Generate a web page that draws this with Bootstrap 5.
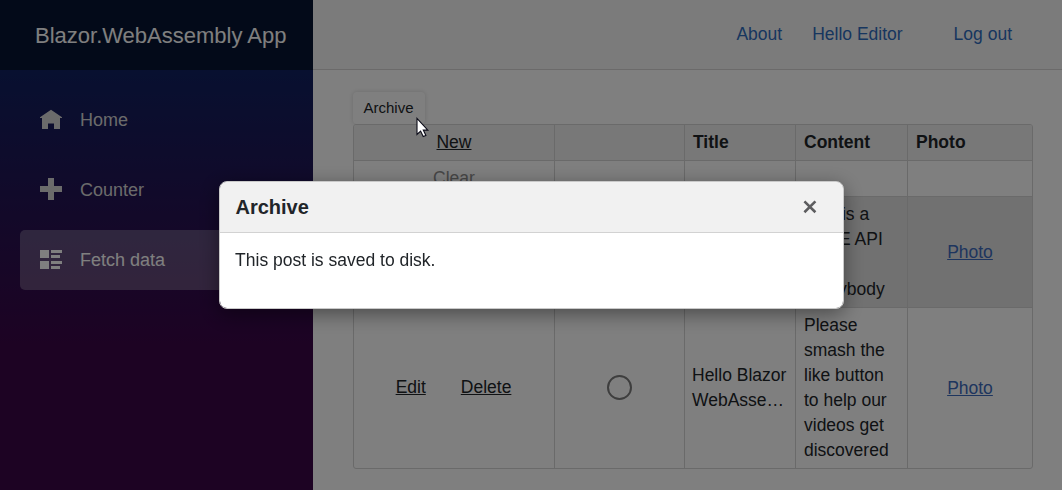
<!DOCTYPE html>
<html lang="en">
<head>
<meta charset="utf-8">
<meta name="viewport" content="width=device-width, initial-scale=1">
<title>Blazor.WebAssembly App</title>
<link href="https://cdn.jsdelivr.net/npm/bootstrap@5.3.0/dist/css/bootstrap.min.css" rel="stylesheet">
<style>
body { font-family: "Liberation Sans", Arial, sans-serif; font-size: 17.5px; line-height: 25px; color: #212529; height: 100vh; overflow: hidden; }
.side { width: 313px; background: linear-gradient(180deg, #052767 0%, #3a0647 70%); }
.brand-bar { height: 70px; background: #061532; color: #fff; font-size: 22px; padding-left: 35px; }
.side .nav { padding: 20px 20px 0; gap: 10px; }
.side .nav-link { height: 60px; padding: 0 0 0 19px; font-size: 18px; color: #d7d7d7; gap: 17px; border-radius: 5px; }
.side .nav-link.active { background: rgba(255,255,255,.25); color: #fff; }
.top-bar { height: 70px; background: #f7f7f7; border-bottom: 1px solid #d6d5d5; padding: 0 50px 1px 0; }
.top-bar a { color: #2f6cbe; text-decoration: none; }
.top-bar .about-link { margin-right: 30px; }
.top-bar .user-link { margin-right: 51px; }
.page-body { padding: 22px 29px 0 40px; }
.tool-btn { width: 72px; height: 32px; padding: 0 1px 0 0; font-size: 15px; line-height: 30px; background: #fff; border-radius: 4px; box-shadow: 0 0 5px rgba(0,0,0,.16); border: 0; color: #212529; }
.data-grid { width: 680px; border: 1px solid #d4d4d4; border-radius: 3px; overflow: hidden; }
.data-grid table { table-layout: fixed; width: 678px; margin: 0; color: #212529; border-collapse: separate; border-spacing: 0; }
.data-grid th, .data-grid td { padding: 5px 8px; border-right: 1px solid #d4d4d4; border-bottom: 1px solid #d4d4d4; vertical-align: middle; overflow-wrap: break-word; }
.data-grid tr > :last-child { border-right: 0; }
.data-grid tbody tr:last-child td { border-bottom: 0; }
.data-grid thead th { background: #f0f0f0; height: 36px; line-height: 25px; }
.data-grid .filter-row td { height: 36px; }
.data-grid .filter-hint { color: #8e8e8e; }
.data-grid .selected td { background: #e2e2e2; }
.data-grid a { color: #212529; }
.data-grid a.photo-link { color: #3d6bbd; }
.data-grid .commands { padding: 4px 9px 6px 8px; }
.data-grid .edit-link { margin-right: 35px; }
.data-grid .title-cell { padding-left: 7px; }
.pick { display: block; width: 25px; height: 25px; margin: -1px auto 0; border: 2px solid #7c7c7c; border-radius: 50%; }
.shade { background: rgba(0,0,0,.5); z-index: 1040; }
.modal-dialog { max-width: 625px; }
.modal-content { height: 128px; border: 1px solid #c9c9c9; border-radius: 8px; box-shadow: 0 5px 20px rgba(0,0,0,.42); overflow: hidden; }
.modal-header { height: 51px; padding: 0 25px 0 16px; background: #f1f1f1; border-bottom: 1px solid #d2d2d2; border-radius: 0; }
.modal-title { font-size: 20px; line-height: 25px; font-weight: 700; }
.modal-body { padding: 15px 15px 0 15.6px; }
.pointer { left: 416px; top: 117px; z-index: 1060; }
</style>
</head>
<body class="d-flex">
<aside class="side flex-shrink-0">
  <div class="brand-bar d-flex align-items-center">Blazor.WebAssembly App</div>
  <nav class="nav flex-column">
    <a class="nav-link d-flex align-items-center" href="#">
      <svg width="24" height="24" viewBox="0 0 24 24" fill="currentColor"><path d="M12 1.7 1 9.2v.8h2v11h6v-5.5h6V21h6V10h2v-.8z"/></svg>Home</a>
    <a class="nav-link d-flex align-items-center" href="#">
      <svg width="24" height="24" viewBox="0 0 24 24" fill="currentColor"><path d="M9 0h6v8h8v6h-8v8H9v-8H1V8h8z"/></svg>Counter</a>
    <a class="nav-link active d-flex align-items-center" href="#">
      <svg width="24" height="24" viewBox="0 0 24 24" fill="currentColor"><path d="M1 2h9v8H1zM12 2h11v3H12zM12 7h9v3h-9zM1 13h9v8H1zM12 13h11v3H12zM12 18h9v3h-9z"/></svg>Fetch data</a>
  </nav>
</aside>
<main class="flex-grow-1">
  <header class="top-bar d-flex align-items-center justify-content-end">
    <a href="#" class="about-link">About</a><a href="#" class="user-link">Hello Editor</a><a href="#">Log out</a>
  </header>
  <div class="page-body">
    <button class="tool-btn d-block" type="button">Archive</button>
    <div class="data-grid">
      <table>
        <colgroup><col style="width:201px"><col style="width:130px"><col style="width:111px"><col style="width:112px"><col style="width:124px"></colgroup>
        <thead><tr><th class="text-center fw-normal"><a href="#">New</a></th><th></th><th>Title</th><th>Content</th><th>Photo</th></tr></thead>
        <tbody>
          <tr class="filter-row"><td class="text-center filter-hint">Clear</td><td></td><td></td><td></td><td></td></tr>
          <tr class="selected"><td></td><td></td><td></td><td>This is a FREE API for everybody</td><td class="text-center"><a class="photo-link" href="#">Photo</a></td></tr>
          <tr><td class="text-center commands"><a href="#" class="edit-link">Edit</a><a href="#">Delete</a></td><td><span class="pick"></span></td><td class="text-nowrap title-cell">Hello Blazor<br>WebAsse…</td><td>Please smash the like button to help our videos get discovered</td><td class="text-center"><a class="photo-link" href="#">Photo</a></td></tr>
        </tbody>
      </table>
    </div>
  </div>
</main>
<div class="shade position-fixed top-0 start-0 w-100 h-100"></div>
<div class="modal d-block overflow-hidden" tabindex="-1">
  <div class="modal-dialog modal-dialog-centered">
    <div class="modal-content">
      <div class="modal-header"><div class="modal-title">Archive</div>
        <svg width="16" height="16" viewBox="0 0 16 16" fill="none" stroke="#5d5d5f" stroke-width="2.6"><path d="m2.4 2.4 11 10.8M13.4 2.4l-11 10.8"/></svg>
      </div>
      <div class="modal-body">This post is saved to disk.</div>
    </div>
  </div>
</div>
<svg class="pointer position-absolute" width="14" height="22" viewBox="0 0 14 22"><path d="M1 1.5v16l3.6-3.4 2.6 5.5 2.7-1.2-2.6-5.3h4.5z" fill="#fff" stroke="#0b0b18" stroke-width="1.1"/></svg>
<script src="https://cdn.jsdelivr.net/npm/bootstrap@5.3.0/dist/js/bootstrap.bundle.min.js"></script>
</body>
</html>
